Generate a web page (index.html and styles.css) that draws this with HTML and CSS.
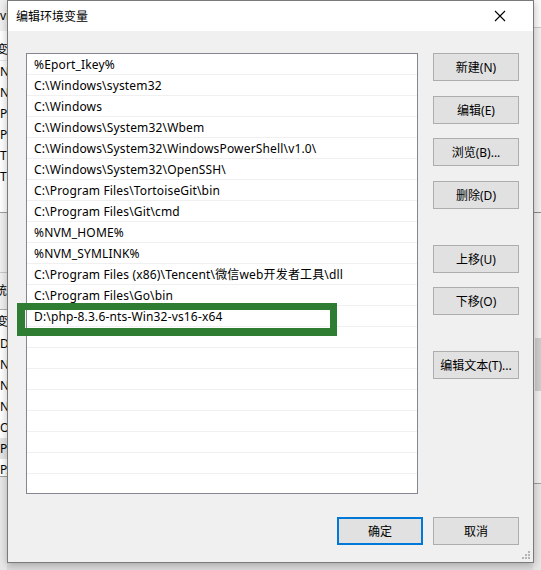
FILE: index.html
```html
<!DOCTYPE html>
<html>
<head>
    <meta name="viewport" content="width=device-width, initial-scale=1">
    <title>编辑环境变量</title>
    <link rel="stylesheet" href="styles.css">
</head>
<body>
    <div class="desk">
        <div class="back-left">
            <div class="back-top">vi</div>
            <div class="back-head">变</div>
            <div class="back-list">
                <div class="back-row">NV</div>
                <div class="back-row">NV</div>
                <div class="back-row">Pa</div>
                <div class="back-row">Ph</div>
                <div class="back-row">TE</div>
                <div class="back-row">TM</div>
            </div>
            <div class="back-gap"></div>
            <div class="back-sys">统</div>
            <div class="back-head2">变</div>
            <div class="back-list2">
                <div class="back-row">Dr</div>
                <div class="back-row">NU</div>
                <div class="back-row">NV</div>
                <div class="back-row">NV</div>
                <div class="back-row">OS</div>
                <div class="back-row sel">Pa</div>
                <div class="back-row">PA</div>
            </div>
            <div class="back-foot"></div>
        </div>
        <div class="back-right">
            <div class="br-top"></div>
            <div class="br-mid"></div>
            <div class="br-list">
                <div class="br-thumb"></div>
            </div>
            <div class="br-foot"></div>
        </div>
    </div>

    <div class="dialog">
        <div class="titlebar">
            <span class="title">编辑环境变量</span>
            <svg class="close" width="12" height="12" viewBox="0 0 12 12">
                <path d="M1 1 L11 11 M11 1 L1 11" stroke="#000" stroke-width="1.1" fill="none"/>
            </svg>
        </div>
        <div class="body">
            <div class="content">
                <div class="list">
                    <div class="row">%Eport_Ikey%</div>
                    <div class="row">C:\Windows\system32</div>
                    <div class="row">C:\Windows</div>
                    <div class="row">C:\Windows\System32\Wbem</div>
                    <div class="row">C:\Windows\System32\WindowsPowerShell\v1.0\</div>
                    <div class="row">C:\Windows\System32\OpenSSH\</div>
                    <div class="row">C:\Program Files\TortoiseGit\bin</div>
                    <div class="row">C:\Program Files\Git\cmd</div>
                    <div class="row">%NVM_HOME%</div>
                    <div class="row">%NVM_SYMLINK%</div>
                    <div class="row">C:\Program Files (x86)\Tencent\微信web开发者工具\dll</div>
                    <div class="row">C:\Program Files\Go\bin</div>
                    <div class="row">D:\php-8.3.6-nts-Win32-vs16-x64</div>
                    <div class="row"></div>
                    <div class="row"></div>
                    <div class="row"></div>
                    <div class="row"></div>
                    <div class="row"></div>
                    <div class="row"></div>
                    <div class="row"></div>
                    <div class="row"></div>
                    <div class="row"></div>
                </div>
                <div class="side">
                    <button class="btn">新建(N)</button>
                    <button class="btn">编辑(E)</button>
                    <button class="btn">浏览(B)...</button>
                    <button class="btn">删除(D)</button>
                    <button class="btn far">上移(U)</button>
                    <button class="btn">下移(O)</button>
                    <button class="btn far">编辑文本(T)...</button>
                </div>
            </div>
            <div class="footer">
                <button class="btn default">确定</button>
                <button class="btn">取消</button>
            </div>
        </div>
        <div class="mark"></div>
        <svg class="grip" width="10" height="10" viewBox="0 0 10 10">
            <rect x="7" y="1" width="2" height="2" fill="#b5b5b5"/>
            <rect x="4" y="4" width="2" height="2" fill="#b5b5b5"/>
            <rect x="7" y="4" width="2" height="2" fill="#b5b5b5"/>
            <rect x="1" y="7" width="2" height="2" fill="#b5b5b5"/>
            <rect x="4" y="7" width="2" height="2" fill="#b5b5b5"/>
            <rect x="7" y="7" width="2" height="2" fill="#b5b5b5"/>
        </svg>
    </div>
</body>
</html>
```

FILE: styles.css
```css
html, body {
    margin: 0;
    padding: 0;
}
body {
    width: 541px;
    height: 570px;
    overflow: hidden;
    position: relative;
    background-color: #dcdcdc;
    font-family: "Noto Sans", "Noto Sans CJK SC", sans-serif;
    font-size: 12px;
    color: #000;
}
.desk {
    display: flex;
    justify-content: space-between;
    height: 570px;
}

/* window behind, the strip left of the dialog */
.back-left {
    width: 7px;
    overflow: hidden;
    background-color: #fff;
    white-space: nowrap;
    display: flex;
    flex-direction: column;
}
.back-top {
    height: 31px;
    line-height: 31px;
    background-color: #f0f0f0;
}
.back-head {
    height: 20px;
    line-height: 20px;
    padding-top: 9px;
    margin-left: -4px;
    border-bottom: 1px solid #e5e5e5;
}
.back-list {
    height: 126px;
}
.back-row {
    height: 21px;
    line-height: 21px;
}
.back-row.sel {
    background-color: #e5e5e5;
}
.back-gap {
    margin-top: 25px;
    height: 59px;
    border-top: 1px solid #a0a0a0;
    border-bottom: 1px solid #c8c8c8;
    background-color: #f0f0f0;
}
.back-sys {
    height: 36px;
    line-height: 36px;
    margin-left: -5px;
    background-color: #f0f0f0;
    border-bottom: 1px solid #b0b0b0;
}
.back-head2 {
    height: 23px;
    line-height: 23px;
    margin-left: -4px;
    background-color: #fff;
}
.back-list2 {
    height: 143px;
    overflow: hidden;
}
.back-foot {
    flex: 1;
    border-top: 1px solid #a0a0a0;
    background-color: #e8e8e8;
}

/* window behind, right strip */
.back-right {
    width: 8px;
    display: flex;
    flex-direction: column;
    background-color: #f0f0f0;
}
.br-top {
    height: 27px;
    background-color: #fafafa;
    border-bottom: 1px solid #c8c8c8;
}
.br-mid {
    height: 184px;
    border-bottom: 1px solid #8a8a8a;
}
.br-list {
    height: 270px;
    border-bottom: 1px solid #a0a0a0;
}
.br-thumb {
    width: 6px;
    height: 53px;
    margin-top: 125px;
    margin-left: 2px;
    background-color: #cdcdcd;
}
.br-foot {
    flex: 1;
    background-color: #e6e6e6;
}

/* the dialog */
.dialog {
    position: absolute;
    left: 7px;
    top: 0;
    width: 525px;
    height: 561px;
    border: 1px solid #7a7a7a;
    background-color: #f0f0f0;
    box-shadow: 0 2px 8px rgba(0,0,0,0.25);
    display: flex;
    flex-direction: column;
}
.titlebar {
    height: 30px;
    background-color: #fff;
    display: flex;
    align-items: center;
    justify-content: space-between;
    padding: 0 27px 0 8px;
}
.close {
    display: block;
}
.body {
    flex: 1;
    display: flex;
    flex-direction: column;
    padding: 22px 14px 0 18px;
}
.content {
    display: flex;
    gap: 15px;
}
.list {
    width: 390px;
    height: 439px;
    border: 1px solid #828790;
    background-color: #fff;
    overflow: hidden;
}
.row {
    height: 20px;
    line-height: 22px;
    border-bottom: 1px solid #f0f0f0;
    padding-left: 7px;
    white-space: nowrap;
    letter-spacing: 0.16px;
}
.side {
    display: flex;
    flex-direction: column;
}
.btn {
    width: 86px;
    height: 28px;
    margin-bottom: 14px;
    padding: 0;
    border: 1px solid #adadad;
    background-color: #e1e1e1;
    font-family: "Noto Sans", "Noto Sans CJK SC", sans-serif;
    font-size: 12px;
    color: #000;
}
.side .btn:nth-child(1),
.side .btn:nth-child(3) {
    margin-bottom: 15px;
}
.btn.far {
    margin-top: 22px;
}
.footer {
    display: flex;
    justify-content: flex-end;
    gap: 10px;
    margin-top: 23px;
}
.footer .btn {
    margin-bottom: 0;
}
.btn.default {
    border: 2px solid #0078d7;
}

/* highlight frame drawn over the list */
.mark {
    position: absolute;
    left: 9px;
    top: 302px;
    width: 305px;
    height: 18px;
    border: 8px solid #2e7d32;
    border-top-width: 7px;
    border-right-width: 7px;
}
.grip {
    position: absolute;
    right: 2px;
    bottom: 2px;
}
```
